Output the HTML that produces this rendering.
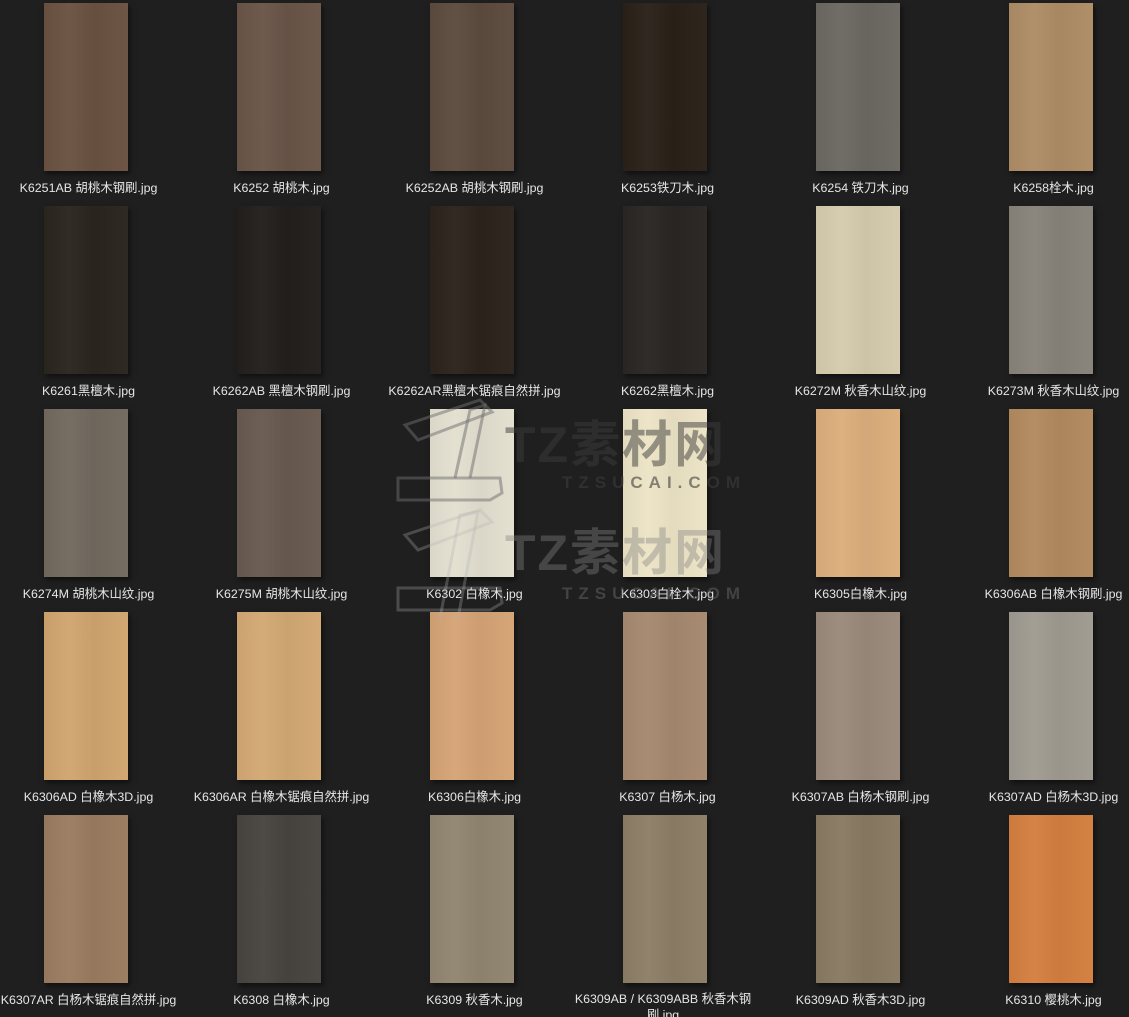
<!DOCTYPE html>
<html><head><meta charset="utf-8"><style>
html,body{margin:0;padding:0;background:#1f1f1f;width:1129px;height:1017px;overflow:hidden;position:relative;font-family:"Liberation Sans","Noto Sans CJK SC",sans-serif}
.t{position:absolute;width:84px;height:168px;box-shadow:2px 3px 5px rgba(0,0,0,.5)}
.l{position:absolute;width:193px;text-align:center;color:#e6e6e6;font-size:12.4px;line-height:16px}
.wm{position:absolute;font-weight:bold;letter-spacing:2px;pointer-events:none}
</style></head><body>
<div id="g"></div>
<script>
var cols=[[ "#6b5242","#6a5548","#5d4b3f","#2a2119","#6c6962","#ae8d66"],
["#2b251f","#221f1d","#2c231c","#2a2623","#d5ccae","#88837a"],
["#726a5f","#685a4f","#e3e0d0","#ede4c6","#dcae7c","#b28a60"],
["#d0a56f","#d3a974","#d5a476","#a6896f","#9a8a7b","#a09b91"],
["#9a7c60","#484440","#918670","#8d7e67","#897a63","#d47f40"]];
var labels=[["K6251AB 胡桃木钢刷.jpg","K6252 胡桃木.jpg","K6252AB 胡桃木钢刷.jpg","K6253铁刀木.jpg","K6254 铁刀木.jpg","K6258栓木.jpg"],
["K6261黑檀木.jpg","K6262AB 黑檀木钢刷.jpg","K6262AR黑檀木锯痕自然拼.jpg","K6262黑檀木.jpg","K6272M 秋香木山纹.jpg","K6273M 秋香木山纹.jpg"],
["K6274M 胡桃木山纹.jpg","K6275M 胡桃木山纹.jpg","K6302 白橡木.jpg","K6303白栓木.jpg","K6305白橡木.jpg","K6306AB 白橡木钢刷.jpg"],
["K6306AD 白橡木3D.jpg","K6306AR 白橡木锯痕自然拼.jpg","K6306白橡木.jpg","K6307 白杨木.jpg","K6307AB 白杨木钢刷.jpg","K6307AD 白杨木3D.jpg"],
["K6307AR 白杨木锯痕自然拼.jpg","K6308 白橡木.jpg","K6309 秋香木.jpg","K6309AB / K6309ABB 秋香木钢刷.jpg","K6309AD 秋香木3D.jpg","K6310 樱桃木.jpg"]];
var h="";
for(var r=0;r<5;r++)for(var c=0;c<6;c++){
var x=44+c*193,y=3+r*203;
h+='<div class="t" style="left:'+x+'px;top:'+y+'px;background:linear-gradient(90deg,rgba(0,0,0,.04),rgba(255,255,255,.03) 30%,rgba(0,0,0,.04) 60%,rgba(255,255,255,.02)),'+cols[r][c]+'"></div>';
var lab=labels[r][c];
if(r==4&&c==3) h+='<div class="l" style="left:'+(c*193-6)+'px;top:'+(991)+'px;width:180px">'+lab+'</div>';
else h+='<div class="l" style="left:'+(c*193-18)+'px;top:'+(180+r*203)+'px;width:213px">'+lab+'</div>';
}
document.getElementById("g").innerHTML=h;
</script>
<svg style="position:absolute;left:0;top:0" width="1129" height="1017">
<g fill="none" stroke="rgba(110,110,110,0.5)" stroke-width="3">
<polygon points="398,478 500,478 502,493 490,500 398,500"/>
<polyline points="455,478 470,410 485,405 470,478"/>
<polygon points="405,425 480,400 492,412 418,440"/>
</g>
<g fill="none" stroke="rgba(180,180,180,0.3)" stroke-width="3">
<polygon points="398,588 500,588 502,603 490,610 398,610"/>
<polyline points="440,618 460,515 478,512 458,618"/>
<polygon points="405,535 480,510 492,522 418,550"/>
</g>
</svg>
<div class="wm" style="left:505px;top:405px;font-size:50px;color:rgba(60,60,60,0.5)">TZ素材网</div>
<div class="wm" style="left:562px;top:473px;font-size:17px;letter-spacing:6px;color:rgba(60,60,60,0.6)">TZSUCAI.COM</div>
<div class="wm" style="left:505px;top:513px;font-size:50px;color:rgba(130,130,130,0.4)">TZ素材网</div>
<div class="wm" style="left:562px;top:584px;font-size:17px;letter-spacing:6px;color:rgba(110,110,110,0.45)">TZSUCAI.COM</div>
</body></html>
